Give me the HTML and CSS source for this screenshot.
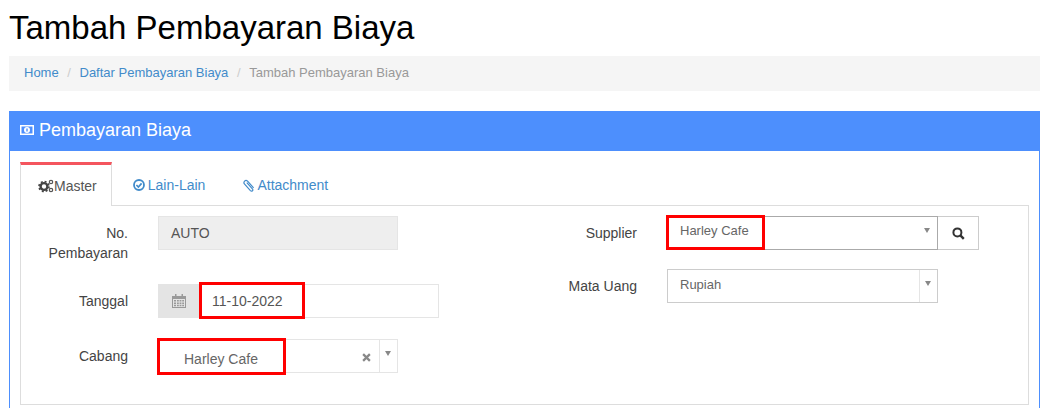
FILE: index.html
```html
<!DOCTYPE html>
<html>
<head>
	<meta charset="UTF-8">
	<meta name="viewport" content="width=device-width, initial-scale=1.0">
	<title>Tambah Pembayaran Biaya</title>
	<link rel="stylesheet" href="styles.css">
</head>
<body>
	<h1>Tambah Pembayaran Biaya</h1>
	<ul class="breadcrumb">
		<li><a href="#">Home</a></li>
		<li class="sep">/</li>
		<li><a href="#">Daftar Pembayaran Biaya</a></li>
		<li class="sep">/</li>
		<li class="current">Tambah Pembayaran Biaya</li>
	</ul>

	<div class="panel">
		<div class="panel-heading">
			<svg class="icon-money" width="14" height="10" viewBox="0 0 14 10">
				<path fill="#fff" fill-rule="evenodd" d="M0 0h14v10H0zM1.5 1.5v7h11v-7zM7 2a3 3 0 1 1 0 6 3 3 0 0 1 0-6z"/>
				<rect x="6.3" y="3.5" width="1.4" height="3" fill="#4d8ffd"/>
			</svg>
			Pembayaran Biaya
		</div>
		<div class="panel-body">
			<ul class="tabs">
				<li class="tab active">
					<svg width="16" height="14" viewBox="0 0 16 14">
						<circle cx="6" cy="7.5" r="3.4" fill="none" stroke="#444" stroke-width="2.4"/>
						<circle cx="6" cy="7.5" r="5" fill="none" stroke="#444" stroke-width="1.6" stroke-dasharray="2 1.93"/>
						<circle cx="13" cy="3" r="1.7" fill="none" stroke="#555" stroke-width="1.2"/>
						<circle cx="13" cy="11" r="1.7" fill="none" stroke="#555" stroke-width="1.2"/>
					</svg>Master
				</li>
				<li class="tab">
					<svg width="12" height="12" viewBox="0 0 12 12">
						<circle cx="6" cy="6" r="5" fill="none" stroke="#428bca" stroke-width="1.8"/>
						<path d="M3.4 6l2 2 3.2-3.6" fill="none" stroke="#428bca" stroke-width="1.7"/>
					</svg>
					Lain-Lain
				</li>
				<li class="tab tab-clip">
					<svg width="12" height="13" viewBox="0 0 12 13">
						<path d="M3.8 3.6l5.6 6.2c1.4 1.6-.6 3.2-2 1.8L1.6 5.2C-.2 3.2 2.4.2 4.6 2.2l6 6.6" fill="none" stroke="#428bca" stroke-width="1.2"/>
					</svg>
					Attachment
				</li>
			</ul>

			<div class="tab-content">
				<div class="form-col">
					<div class="row">
						<label>No. Pembayaran</label>
						<div class="control w240 readonly">AUTO</div>
					</div>
					<div class="row">
						<label>Tanggal</label>
						<div class="date-group">
							<span class="addon">
								<svg width="14" height="14" viewBox="0 0 14 14">
									<path fill="#999" fill-rule="evenodd" d="M0 2h3V0h1.5v2h5V0H11v2h3v12H0zM1 5v8h12V5zM2 6h2v1.5H2zM5 6h1.8v1.5H5zM7.6 6h1.8v1.5H7.6zM10.2 6H12v1.5h-1.8zM2 8.4h2v1.5H2zM5 8.4h1.8v1.5H5zM7.6 8.4h1.8v1.5H7.6zM10.2 8.4H12v1.5h-1.8zM2 10.8h2v1.5H2zM5 10.8h1.8v1.5H5zM7.6 10.8h1.8v1.5H7.6zM10.2 10.8H12v1.5h-1.8z"/>
								</svg>
							</span>
							<div class="date-input">11-10-2022</div>
							<span class="mark mark-date"></span>
						</div>
					</div>
					<div class="row last">
						<label>Cabang</label>
						<div class="select w240 light">
							<span class="select-text"></span>
							<span class="clear">
								<svg width="9" height="9" viewBox="0 0 8 8"><path d="M1 1l6 6M7 1L1 7" stroke="#888" stroke-width="2"/></svg>
							</span>
							<span class="arrow"></span>
							<span class="mark mark-cabang">Harley Cafe</span>
						</div>
					</div>
				</div>
				<div class="form-col">
					<div class="row short">
						<label>Supplier</label>
						<div class="select w271 dark">
							<span class="select-text small">Harley Cafe</span>
							<span class="arrow plain"></span>
							<span class="mark mark-supplier"></span>
						</div>
						<button class="search-btn">
							<svg width="13" height="13" viewBox="0 0 13 13">
								<circle cx="5.4" cy="5.4" r="4" fill="none" stroke="#333" stroke-width="2"/>
								<path d="M8.4 8.4l3.4 3.4" stroke="#333" stroke-width="2.4"/>
							</svg>
						</button>
					</div>
					<div class="row">
						<label>Mata Uang</label>
						<div class="select w271 mid">
							<span class="select-text small lower">Rupiah</span>
							<span class="arrow"></span>
						</div>
					</div>
				</div>
			</div>
		</div>
	</div>
</body>
</html>
```

FILE: styles.css
```css
* {
	box-sizing: border-box;
}

html, body {
	height: 100%;
}

body {
	font-family: "Liberation Sans", Arial, sans-serif;
	font-size: 14px;
	line-height: 20px;
	color: #333;
	margin: 0;
	padding: 0 7px 0 9px;
	background-color: #fff;
	display: flex;
	flex-direction: column;
	overflow: hidden;
}

h1 {
	font-size: 33px;
	font-weight: 400;
	line-height: 36px;
	color: #000;
	margin: 0;
	padding: 10px 0;
}

a {
	color: #428bca;
	text-decoration: none;
}

ul {
	list-style: none;
	margin: 0;
	padding: 0;
}

.breadcrumb {
	display: flex;
	align-items: center;
	height: 35px;
	padding: 0 15px 2px;
	margin-bottom: 20px;
	font-size: 13px;
	background-color: #f5f5f5;
}

.breadcrumb .sep {
	color: #ccc;
	padding: 0 8.6px;
}

.breadcrumb .current {
	color: #999;
}

.panel {
	flex: 1;
	border: 1px solid #4d8ffd;
	border-bottom: 0;
	border-top: 0;
}

.panel-heading {
	display: flex;
	align-items: center;
	gap: 5px;
	height: 40px;
	padding: 0 0 2px 10px;
	font-size: 18px;
	color: #fff;
	background-color: #4d8ffd;
}

.panel-body {
	padding: 11px 10px 0 10px;
}

.tabs {
	position: relative;
	display: flex;
	gap: 4px;
	height: 44px;
	margin-bottom: -1px;
}

.tab {
	display: flex;
	align-items: center;
	gap: 3px;
	padding: 2px 17px 0;
	color: #428bca;
}

.tab-clip {
	gap: 2px;
}

.tab.active {
	color: #555;
	gap: 0;
	background-color: #fff;
	border: 1px solid #ddd;
	border-top: 3px solid #f4555e;
	border-bottom: 0;
	height: 44px;
	padding: 0 14px 0 17px;
}

.tab-content {
	display: grid;
	grid-template-columns: 509px 1fr;
	border: 1px solid #ddd;
	padding-top: 10px;
	height: 200px;
}

.row {
	display: flex;
	align-items: flex-start;
	margin-bottom: 21px;
}

.row.short {
	margin-bottom: 19px;
}

.row.last {
	margin-bottom: 0;
}

label {
	width: 107px;
	margin-right: 30px;
	padding: 7px 0 0 15px;
	text-align: right;
	color: #444;
}

.control {
	height: 34px;
	padding: 6px 12px;
	color: #555;
	border: 1px solid #e5e5e5;
}

.readonly {
	background-color: #eee;
}

.w240 {
	width: 240px;
}

.w271 {
	width: 271px;
}

.date-group {
	position: relative;
	display: flex;
	width: 281px;
	height: 34px;
}

.addon {
	display: flex;
	align-items: center;
	justify-content: center;
	width: 41px;
	background-color: #e4e4e4;
}

.date-input {
	flex: 1;
	padding: 6px 13px;
	color: #555;
	border: 1px solid #e5e5e5;
	border-left: 0;
}

.select {
	position: relative;
	display: flex;
	height: 34px;
	border: 1px solid #ccc;
	color: #666;
}

.select.light {
	border-color: #e5e5e5;
}

.select.dark {
	border-color: #aaa;
}

.select-text {
	flex: 1;
	padding: 4px 12px;
}

.select-text.small {
	font-size: 13px;
}

.select-text.lower {
	padding-top: 5px;
}

.clear {
	display: flex;
	align-items: center;
	justify-content: center;
	width: 20px;
	padding: 2px 6px 0 0;
}

.arrow {
	position: relative;
	width: 18px;
	border-left: 1px solid #e5e5e5;
}

.arrow.plain {
	border-left: 0;
}

.arrow::after {
	content: "";
	position: absolute;
	top: 11px;
	left: 5px;
	border-top: 5px solid #888;
	border-left: 3.5px solid transparent;
	border-right: 3.5px solid transparent;
}

.search-btn {
	display: flex;
	align-items: center;
	justify-content: center;
	width: 41px;
	height: 34px;
	padding: 0;
	background-color: #fff;
	border: 1px solid #ccc;
	border-left: 0;
}

/* kotak merah penanda di atas field */
.mark {
	position: absolute;
	border: 3px solid #f00;
}

.mark-date {
	left: 41px;
	top: -2px;
	width: 106px;
	height: 37px;
}

.mark-cabang {
	left: -2px;
	top: -2px;
	width: 129px;
	height: 37px;
	padding: 8px 0 0 24px;
	font-size: 14px;
	line-height: 20px;
	color: #666;
	background-color: #fff;
}

.mark-supplier {
	left: -2px;
	top: -2px;
	width: 99px;
	height: 35px;
}
```
